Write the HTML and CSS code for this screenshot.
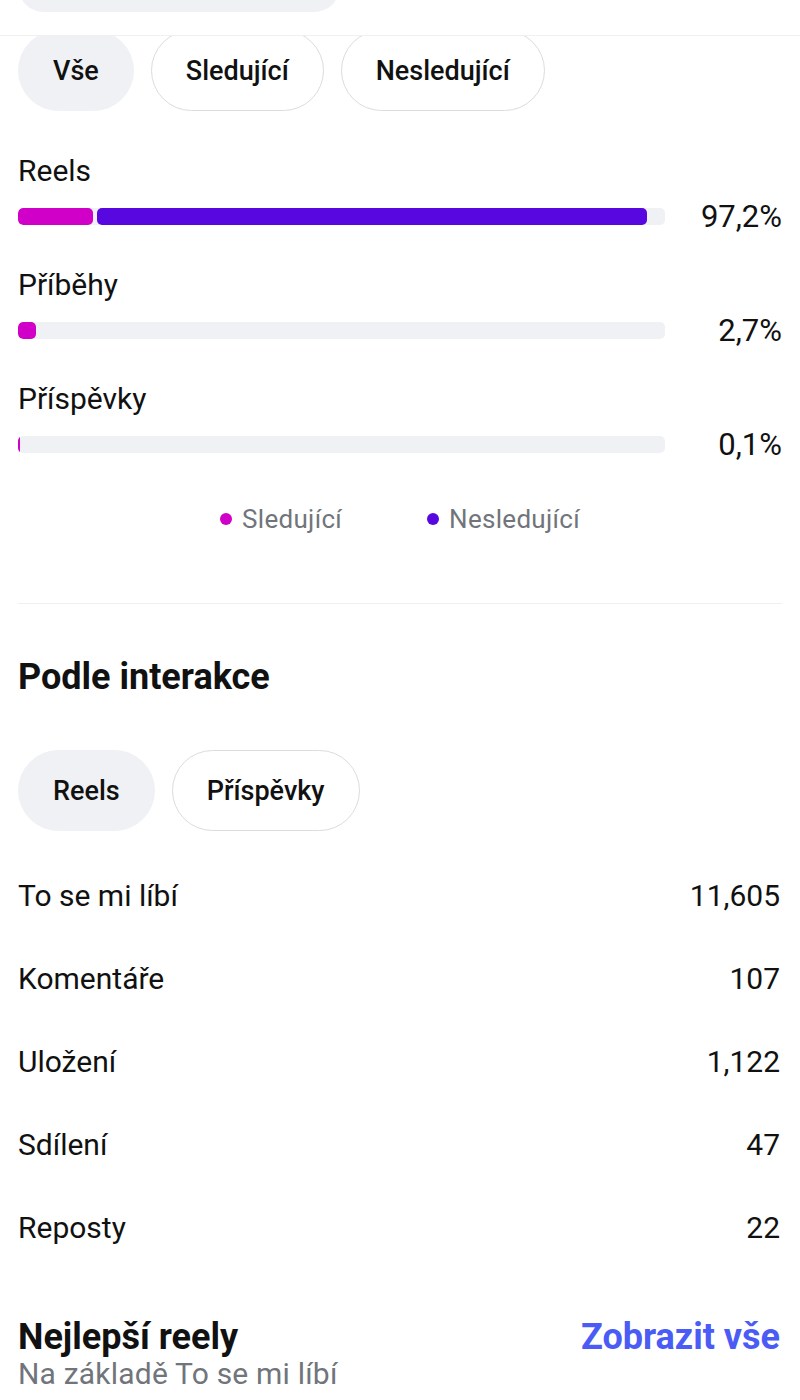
FILE: index.html
```html
<!DOCTYPE html>
<html lang="cs">
<head>
    <meta charset="UTF-8">
    <meta name="viewport" content="width=device-width, initial-scale=1.0">
    <title>Přehled obsahu</title>
    <link rel="stylesheet" href="styles.css">
</head>
<body>
    <div class="topbar">
        <div class="search-pill"></div>
    </div>

    <div class="chip-strip">
        <div class="chips">
            <span class="chip active">Vše</span>
            <span class="chip">Sledující</span>
            <span class="chip">Nesledující</span>
        </div>
    </div>

    <section class="breakdown">
        <div class="metric">
            <div class="metric-label">Reels</div>
            <div class="metric-row">
                <div class="track">
                    <div class="fill follow" style="width: 11.6%"></div>
                    <div class="fill nonfollow" style="width: 85%"></div>
                </div>
                <span class="pct">97,2%</span>
            </div>
        </div>
        <div class="metric">
            <div class="metric-label">Příběhy</div>
            <div class="metric-row">
                <div class="track">
                    <div class="fill follow" style="width: 2.8%"></div>
                </div>
                <span class="pct">2,7%</span>
            </div>
        </div>
        <div class="metric">
            <div class="metric-label">Příspěvky</div>
            <div class="metric-row">
                <div class="track">
                    <div class="fill follow thin" style="width: 0.3%"></div>
                </div>
                <span class="pct">0,1%</span>
            </div>
        </div>

        <div class="legend">
            <span class="legend-item"><i class="dot follow"></i>Sledující</span>
            <span class="legend-item"><i class="dot nonfollow"></i>Nesledující</span>
        </div>
    </section>

    <hr class="divider">

    <section class="interactions">
        <h2>Podle interakce</h2>
        <div class="chips">
            <span class="chip active">Reels</span>
            <span class="chip">Příspěvky</span>
        </div>
        <ul class="stats">
            <li><span>To se mi líbí</span><span>11,605</span></li>
            <li><span>Komentáře</span><span>107</span></li>
            <li><span>Uložení</span><span>1,122</span></li>
            <li><span>Sdílení</span><span>47</span></li>
            <li><span>Reposty</span><span>22</span></li>
        </ul>
    </section>

    <section class="top-reels">
        <div class="top-head">
            <h2>Nejlepší reely</h2>
            <a class="see-all" href="#">Zobrazit vše</a>
        </div>
        <div class="subtitle">Na základě To se mi líbí</div>
    </section>
</body>
</html>
```

FILE: styles.css
```css
body {
    margin: 0;
    font-family: Roboto, 'Liberation Sans', sans-serif;
    color: #111;
    background: #fff;
}
.topbar {
    height: 35px;
    overflow: hidden;
    border-bottom: 1px solid #f0f0f0;
    padding: 0 18px;
}
.search-pill {
    width: 322px;
    height: 52px;
    margin-top: -40px;
    border-radius: 26px;
    background-color: #eff1f4;
}
.chip-strip {
    height: 75px;
    overflow: hidden;
}
.chip-strip .chips {
    margin-top: -6px;
}
.chips {
    display: flex;
    gap: 17px;
    padding: 0 18px;
}
.chip {
    height: 81px;
    box-sizing: border-box;
    display: flex;
    align-items: center;
    padding: 0 34px;
    border: 1.5px solid #dcdcdc;
    border-radius: 41px;
    font-size: 27px;
    font-weight: 500;
    color: #111;
}
.chip.active {
    background-color: #eff1f4;
    border-color: #eff1f4;
}
.breakdown {
    padding: 42px 18px 0;
}
.metric {
    margin-bottom: 24px;
}
.metric-label {
    font-size: 30px;
    line-height: 36px;
}
.metric-row {
    display: flex;
    align-items: center;
    justify-content: space-between;
    height: 54px;
}
.track {
    width: 647px;
    height: 17px;
    border-radius: 5px;
    background-color: #eff1f4;
    display: flex;
    gap: 4px;
    overflow: hidden;
}
.fill {
    height: 100%;
    border-radius: 5px;
}
.fill.follow {
    background-color: #d000c8;
}
.fill.nonfollow {
    background-color: #5807e0;
}
.fill.thin {
    border-radius: 0;
}
.pct {
    font-size: 31px;
}
.legend {
    display: flex;
    justify-content: center;
    gap: 85px;
    margin-top: 33px;
    line-height: 30px;
}
.legend-item {
    display: flex;
    align-items: center;
    font-size: 26px;
    letter-spacing: 0.3px;
    color: #71757b;
}
.dot {
    width: 12px;
    height: 12px;
    border-radius: 50%;
    margin-right: 10px;
}
.dot.follow {
    background-color: #d000c8;
}
.dot.nonfollow {
    background-color: #5807e0;
}
.divider {
    border: none;
    border-top: 1px solid #efefef;
    margin: 69px 18px 0;
}
.interactions h2,
.top-reels h2 {
    font-size: 36px;
    line-height: 40px;
    font-weight: bold;
    margin: 0;
}
.interactions {
    padding-top: 53px;
}
.interactions h2 {
    padding: 0 18px;
    margin-bottom: 53px;
}
.stats {
    list-style: none;
    margin: 23px 0 0;
    padding: 0 20px 0 18px;
}
.stats li {
    display: flex;
    justify-content: space-between;
    align-items: center;
    height: 83px;
    font-size: 30px;
}
.top-reels {
    padding: 48px 20px 0 18px;
}
.top-head {
    display: flex;
    justify-content: space-between;
    align-items: center;
}
.see-all {
    font-size: 36px;
    line-height: 40px;
    font-weight: bold;
    color: #4a5cf5;
    text-decoration: none;
}
.subtitle {
    font-size: 30px;
    line-height: 34px;
    letter-spacing: 0.2px;
    color: #71757b;
}
```
